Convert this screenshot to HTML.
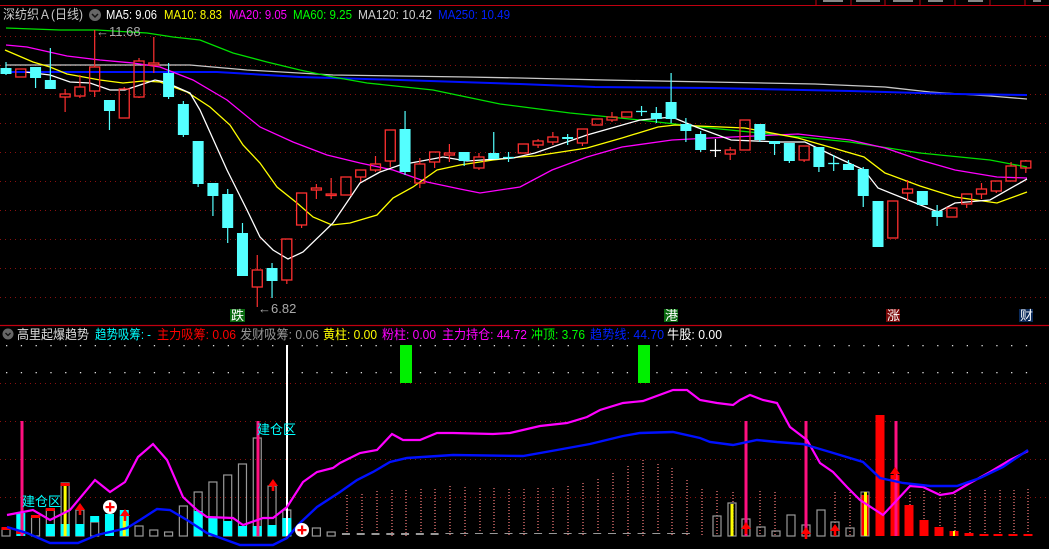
<!DOCTYPE html>
<html><head><meta charset="utf-8"><style>
html,body{margin:0;padding:0;background:#000;width:1049px;height:549px;overflow:hidden}
svg{display:block}
text{font-family:"Liberation Sans","Noto Sans CJK SC",sans-serif;font-size:13px}
</style></head><body>
<svg id="s" width="1049" height="549" xmlns="http://www.w3.org/2000/svg">
<rect width="1049" height="549" fill="#000"/>
<line x1="0" y1="5.5" x2="1049" y2="5.5" stroke="#c00010" stroke-width="1"/>
<g stroke="#c00010"><line x1="816" y1="0" x2="816" y2="5"/><line x1="851" y1="0" x2="851" y2="5"/><line x1="885" y1="0" x2="885" y2="5"/><line x1="920" y1="0" x2="920" y2="5"/><line x1="955" y1="0" x2="955" y2="5"/><line x1="990" y1="0" x2="990" y2="5"/><line x1="1025" y1="0" x2="1025" y2="5"/></g>
<g fill="#888"><rect x="823" y="0" width="20" height="2"/><rect x="856" y="0" width="24" height="2"/><rect x="893" y="0" width="20" height="2"/><rect x="928" y="0" width="15" height="2"/><rect x="968" y="0" width="15" height="2"/><rect x="1033" y="0" width="8" height="2"/></g>
<g id="grid" stroke="#8a1010" stroke-dasharray="1,4" stroke-width="1"></g>
<g id="ma" fill="none" stroke-width="1.3"></g>
<g id="cd"></g>
<text x="3" y="19" fill="#c8c8c8" textLength="80" lengthAdjust="spacingAndGlyphs">深纺织Ａ(日线)</text>
<circle cx="95" cy="15" r="6" fill="#666"/><path d="M92 14 l3 3 l3 -3" stroke="#111" stroke-width="1.5" fill="none"/>
<text x="106" y="19" fill="#fff" textLength="51" lengthAdjust="spacingAndGlyphs">MA5: 9.06</text>
<text x="164" y="19" fill="#ff0" textLength="58" lengthAdjust="spacingAndGlyphs">MA10: 8.83</text>
<text x="229" y="19" fill="#f0f" textLength="58" lengthAdjust="spacingAndGlyphs">MA20: 9.05</text>
<text x="293" y="19" fill="#0f0" textLength="59" lengthAdjust="spacingAndGlyphs">MA60: 9.25</text>
<text x="358" y="19" fill="#d0d0d0" textLength="74" lengthAdjust="spacingAndGlyphs">MA120: 10.42</text>
<text x="438" y="19" fill="#0020ff" textLength="72" lengthAdjust="spacingAndGlyphs">MA250: 10.49</text>
<text x="96" y="36" fill="#aaa" font-size="12">←11.68</text>
<text x="258" y="313" fill="#aaa" font-size="12">←6.82</text>
<rect x="230" y="309" width="15" height="13" fill="#0a6a10"/><text x="231" y="320" fill="#fff" font-size="12">跌</text>
<rect x="664" y="309" width="14" height="13" fill="#0a6a10"/><text x="665" y="320" fill="#fff" font-size="12">港</text>
<rect x="886" y="309" width="14" height="13" fill="#7a0808"/><text x="887" y="320" fill="#fff" font-size="12">涨</text>
<rect x="1019" y="309" width="14" height="13" fill="#0a2a5a"/><text x="1020" y="320" fill="#fff" font-size="12">财</text>
<line x1="0" y1="325.5" x2="1049" y2="325.5" stroke="#c00010" stroke-width="1.2"/>
<circle cx="8" cy="334" r="5.5" fill="#666"/><path d="M5.5 333 l2.5 2.5 l2.5 -2.5" stroke="#111" stroke-width="1.3" fill="none"/>
<g>
<text x="17" y="339" fill="#ddd" textLength="72" lengthAdjust="spacingAndGlyphs">高里起爆趋势</text>
<text x="95" y="339" fill="#0ff" textLength="56" lengthAdjust="spacingAndGlyphs">趋势吸筹: -</text>
<text x="157" y="339" fill="#f00" textLength="79" lengthAdjust="spacingAndGlyphs">主力吸筹: 0.06</text>
<text x="240" y="339" fill="#999" textLength="79" lengthAdjust="spacingAndGlyphs">发财吸筹: 0.06</text>
<text x="323" y="339" fill="#ff0" textLength="54" lengthAdjust="spacingAndGlyphs">黄柱: 0.00</text>
<text x="382" y="339" fill="#f0f" textLength="54" lengthAdjust="spacingAndGlyphs">粉柱: 0.00</text>
<text x="442" y="339" fill="#f0f" textLength="85" lengthAdjust="spacingAndGlyphs">主力持仓: 44.72</text>
<text x="531" y="339" fill="#0f0" textLength="54" lengthAdjust="spacingAndGlyphs">冲顶: 3.76</text>
<text x="590" y="339" fill="#0020ff" textLength="74" lengthAdjust="spacingAndGlyphs">趋势线: 44.70</text>
<text x="667" y="339" fill="#fff" textLength="55" lengthAdjust="spacingAndGlyphs">牛股: 0.00</text>
</g>
<g id="low"></g>
<text x="22" y="506" fill="#0ff" font-size="12.5">建仓区</text>
<text x="257" y="434" fill="#0ff" font-size="12.5">建仓区</text>
</svg>
<script>
var NS="http://www.w3.org/2000/svg";
function el(p,t,a){var e=document.createElementNS(NS,t);for(var k in a)e.setAttribute(k,a[k]);p.appendChild(e);return e;}
var g=document.getElementById('grid');
[36,65,94,123,152,181,210,239,268,297].forEach(function(y){el(g,'line',{x1:0,y1:y+.5,x2:1049,y2:y+.5});});
var ma=document.getElementById('ma');
function pl(pts,c,w){el(ma,'polyline',{points:pts,stroke:c,'stroke-width':w||1.3});}
pl("6,65 190,65 247,70 333,75 467,77 520,78 605,80 710,82 815,84 885,87 930,92 990,96 1027,99","#c8c8c8");
pl("6,72 73,72 217,72 300,77 400,80 520,84 595,87 710,88 850,91 955,94 1027,95","#0010ff",2);
pl("6,28 60,30 97,30 147,33 173,37 200,40 233,53 267,62 300,70 333,77 367,83 433,90 500,104 570,113 640,120 710,128 780,135 850,142 920,153 990,160 1027,167","#00e000");
pl("6,45 27,47 67,56 100,60 133,63 160,67 193,80 227,100 260,127 293,142 327,155 360,163 393,170 427,182 460,189 480,193 520,187 552,170 587,157 622,147 672,140 710,138 798,134 850,140 885,148 920,160 955,170 997,177 1027,178","#f0f");
pl("5,50 33,62 50,67 67,74 100,80 123,83 143,81 160,82 187,92 210,107 230,125 243,145 260,163 277,187 297,203 313,217 332,225 350,223 377,215 393,198 413,187 437,170 460,165 493,160 520,157 535,156 587,148 622,138 658,127 675,125 745,128 798,138 833,148 864,157 885,173 920,186 955,197 997,203 1027,192","#ff0");
pl("25,72 50,75 70,82 90,83 110,90 125,90 140,85 155,80 165,82 190,93 200,110 227,170 247,210 260,237 273,250 288,259 303,252 333,223 360,183 380,172 400,165 443,157 467,161 513,158 535,153 587,135 640,120 672,117 696,127 731,140 780,142 805,142 836,157 864,170 878,188 903,198 938,212 955,203 990,200 1027,179","#fff");
var C=[
['c',68,74,62,75],['r',69,77,69,77],['c',67,78,67,88],['c',80,89,48,89],['r',94,97,89,112],['r',87,96,75,98],['r',67,91,30,97],['c',100,111,100,130],['r',89,118,87,118],['r',61,97,58,98],
['r',63,65,37,73],['c',73,97,63,99],['c',104,135,101,137],['c',141,184,141,187],['c',183,196,183,216],['c',194,228,189,243],['c',233,276,223,276],['r',270,287,255,307],['c',268,281,263,298],['r',239,280,239,284],
['r',193,225,193,228],['r',188,190,184,199],['r',194,195,178,199],['r',177,195,177,195],['r',170,177,170,182],['r',164,170,156,172],['r',130,161,130,167],['c',129,172,111,175],['r',164,183,158,188],['r',152,162,152,168],
['r',153,155,144,162],['c',152,161,152,166],['r',157,168,153,170],['c',153,159,132,159],['c',157,158,152,162],['r',144,153,144,153],['r',141,145,139,148],['r',137,142,132,145],['c',137,139,134,145],['r',129,143,129,146],
['r',119,125,119,125],['r',117,120,112,122],['r',112,117,112,117],['c',111,112,106,116],['c',113,119,107,123],['c',102,119,73,123],['c',124,131,118,142],['c',134,150,131,152],['w',150,151,139,157],['r',150,154,147,160],
['r',120,150,120,150],['c',124,140,124,142],['c',141,144,141,155],['c',143,161,143,163],['r',146,160,146,162],['c',147,167,147,172],['c',163,164,155,171],['c',164,170,160,170],['c',169,196,167,207],['c',201,247,201,247],
['r',201,238,201,238],['r',189,193,180,201],['c',191,205,191,205],['c',211,217,205,226],['r',208,217,208,217],['r',194,204,194,208],['r',189,194,183,199],['r',181,191,181,193],['r',166,181,162,181],['r',161,168,160,173]];
var cd=document.getElementById('cd');
function X(i){return 6+i*14.78;}
C.forEach(function(d,i){var x=X(i);var col=d[0]=='r'?'#ff3030':(d[0]=='c'?'#54ffff':'#fff');
 var t=d[1],b=d[2];
 if(d[0]=='r'){
  if(d[3]<t)el(cd,'line',{x1:x,y1:d[3],x2:x,y2:t,stroke:col,'stroke-width':1.2});
  if(d[4]>b)el(cd,'line',{x1:x,y1:b,x2:x,y2:d[4],stroke:col,'stroke-width':1.2});
  el(cd,'rect',{x:x-5,y:t,width:10,height:Math.max(b-t,1.5),fill:'none',stroke:col,'stroke-width':1.3});
 }else{
  el(cd,'line',{x1:x,y1:d[3],x2:x,y2:d[4],stroke:col,'stroke-width':1.2});
  if(b-t<=1.5)el(cd,'line',{x1:x-5.5,y1:t+.5,x2:x+5.5,y2:t+.5,stroke:col,'stroke-width':1.3});
  else el(cd,'rect',{x:x-5.5,y:t,width:11,height:b-t,fill:col});
 }
});
var lo=document.getElementById('low');
for(var x=6;x<1040;x+=14.78){el(lo,'rect',{x:x,y:345,width:1.3,height:1.3,fill:'#ddd'});el(lo,'rect',{x:x,y:372,width:1.3,height:1.3,fill:'#ddd'});}
[383,421,459,497].forEach(function(y){el(lo,'line',{x1:0,y1:y+.5,x2:1049,y2:y+.5,stroke:'#8a1010','stroke-dasharray':'1,4'});});
el(lo,'rect',{x:400,y:345,width:12,height:38,fill:'#00f000'});
el(lo,'rect',{x:638,y:345,width:12,height:38,fill:'#00f000'});
var sal=[[347,495],[362,494],[377,491],[392,490],[406,490],[421,489],[435,489],[450,486],[465,487],[480,488],[494,488],[509,489],[524,489],[538,488],[553,488],[568,486],[583,483],[598,479],[613,473],[628,466],[643,460],[658,464],[672,468],[687,480],[702,489],[717,491],[733,492],[760,491],[775,492],[835,492],[850,492],[880,490],[895,490],[910,492],[924,491],[940,492],[955,491],[970,490],[985,490],[1000,490],[1014,490],[1028,489]];
sal.forEach(function(s){el(lo,'line',{x1:s[0],y1:s[1],x2:s[0],y2:536,stroke:'#ff8080','stroke-width':1.2,'stroke-dasharray':'1,2'});});
for(var i=24;i<=47;i++){var x=X(i-1);el(lo,'rect',{x:x-4,y:533,width:8,height:i<31?2:1,fill:'#999'});}
var B=[[1,529,0,0,527],[2,0,513,0,531],[3,516,0,0,515],[4,509,524,0,508],[5,483,524,486,483],[6,510,524,0,0],[7,522,0,0,0],[8,0,514,0,0],[9,517,510,517,0],[10,526,0,0,0],[11,530,0,0,0],[12,532,0,0,0],[13,506,0,0,0],[14,492,511,0,0],[15,482,517,0,0],[16,475,521,0,0],[17,464,526,0,0],[18,438,526,0,0],[19,486,525,0,0],[20,510,518,0,0],[22,528,0,0,0],[23,532,0,0,0]];
B.forEach(function(b){var x=X(b[0]-1);
 if(b[1])el(lo,'rect',{x:x-4,y:b[1],width:8,height:536-b[1],fill:'none',stroke:'#999','stroke-width':1.2});
 if(b[2])el(lo,'rect',{x:x-4.5,y:b[2],width:9,height:536-b[2],fill:'#00ffff'});
 if(b[3])el(lo,'rect',{x:x-1.5,y:b[3],width:3,height:536-b[3],fill:'#ff0'});
 if(b[4])el(lo,'rect',{x:x-4.5,y:b[4],width:9,height:3,fill:'#f00'});
});
el(lo,'rect',{x:X(6)-4.5,y:516,width:9,height:6,fill:'#00ffff'});
var R=[[717,516,0],[732,503,1],[746,519,0],[761,527,0],[776,531,0],[791,515,0],[806,525,0],[821,510,0],[835,522,0],[850,528,0]];
R.forEach(function(r){el(lo,'rect',{x:r[0]-4,y:r[1],width:8,height:536-r[1],fill:'none',stroke:'#999','stroke-width':1.2});if(r[2])el(lo,'rect',{x:r[0]-1.5,y:r[1]+1,width:3,height:535-r[1],fill:'#ff0'});});
var RR=[[865,495],[880,415],[895,475],[909,505],[924,520],[939,527],[954,531],[969,533],[984,534],[998,534],[1013,534],[1028,534]];
RR.forEach(function(r){el(lo,'rect',{x:r[0]-4.5,y:r[1],width:9,height:536-r[1],fill:'#f00'});});
el(lo,'rect',{x:861,y:492,width:8,height:44,fill:'none',stroke:'#999','stroke-width':1});
el(lo,'rect',{x:864,y:492,width:3,height:44,fill:'#ff0'});
el(lo,'rect',{x:953,y:531,width:2,height:5,fill:'#ff0'});
[[22,421],[258,421],[746,421],[806,421],[896,421]].forEach(function(p){el(lo,'rect',{x:p[0]-1.5,y:p[1],width:3,height:536-p[1],fill:'#ff1080'});});
el(lo,'rect',{x:286,y:345,width:2,height:191,fill:'#fff'});
el(lo,'polyline',{points:"7,515 33,510 50,520 70,510 95,480 110,492 125,482 138,457 153,444 167,460 183,497 197,510 207,517 233,518 243,525 263,518 273,518 287,507 303,482 317,472 333,468 340,463 360,453 377,450 392,434 403,440 420,440 437,433 453,433 493,434 510,433 540,426 567,423 587,417 600,410 623,403 643,401 673,390 687,390 700,400 717,403 733,405 740,400 750,395 763,400 777,403 790,427 807,440 820,463 833,472 847,487 860,500 883,515 897,500 910,486 923,487 940,495 953,493 970,483 990,472 1010,460 1028,451",fill:'none',stroke:'#f0f','stroke-width':2.2});
el(lo,'polyline',{points:"7,527 27,533 50,543 78,543 97,535 127,528 140,520 157,509 170,510 187,520 207,533 240,545 273,545 287,538 300,523 317,507 340,492 357,480 373,472 390,462 407,458 453,455 523,456 557,450 590,444 623,436 640,433 673,432 700,438 710,442 733,445 757,440 777,442 803,444 830,452 863,462 880,478 903,483 930,486 957,486 980,478 1003,467 1028,450",fill:'none',stroke:'#0010ff','stroke-width':2.4});
function arrow(x,y){el(lo,'path',{d:'M'+(x-5)+' '+(y+7)+' L'+x+' '+y+' L'+(x+5)+' '+(y+7)+' L'+(x+1.3)+' '+(y+7)+' L'+(x+1.3)+' '+(y+12)+' L'+(x-1.3)+' '+(y+12)+' L'+(x-1.3)+' '+(y+7)+'Z',fill:'#f00'});}
arrow(80,503);arrow(125,509);arrow(273,479);arrow(746,522);arrow(806,527);arrow(835,524);arrow(895,467);
function plus(x,y){el(lo,'circle',{cx:x,cy:y,r:7,fill:'#fff'});el(lo,'rect',{x:x-4.5,y:y-1,width:9,height:2.2,fill:'#f00'});el(lo,'rect',{x:x-1,y:y-4.5,width:2.2,height:9,fill:'#f00'});}
plus(110,507);plus(302,530);
</script>
</body></html>
